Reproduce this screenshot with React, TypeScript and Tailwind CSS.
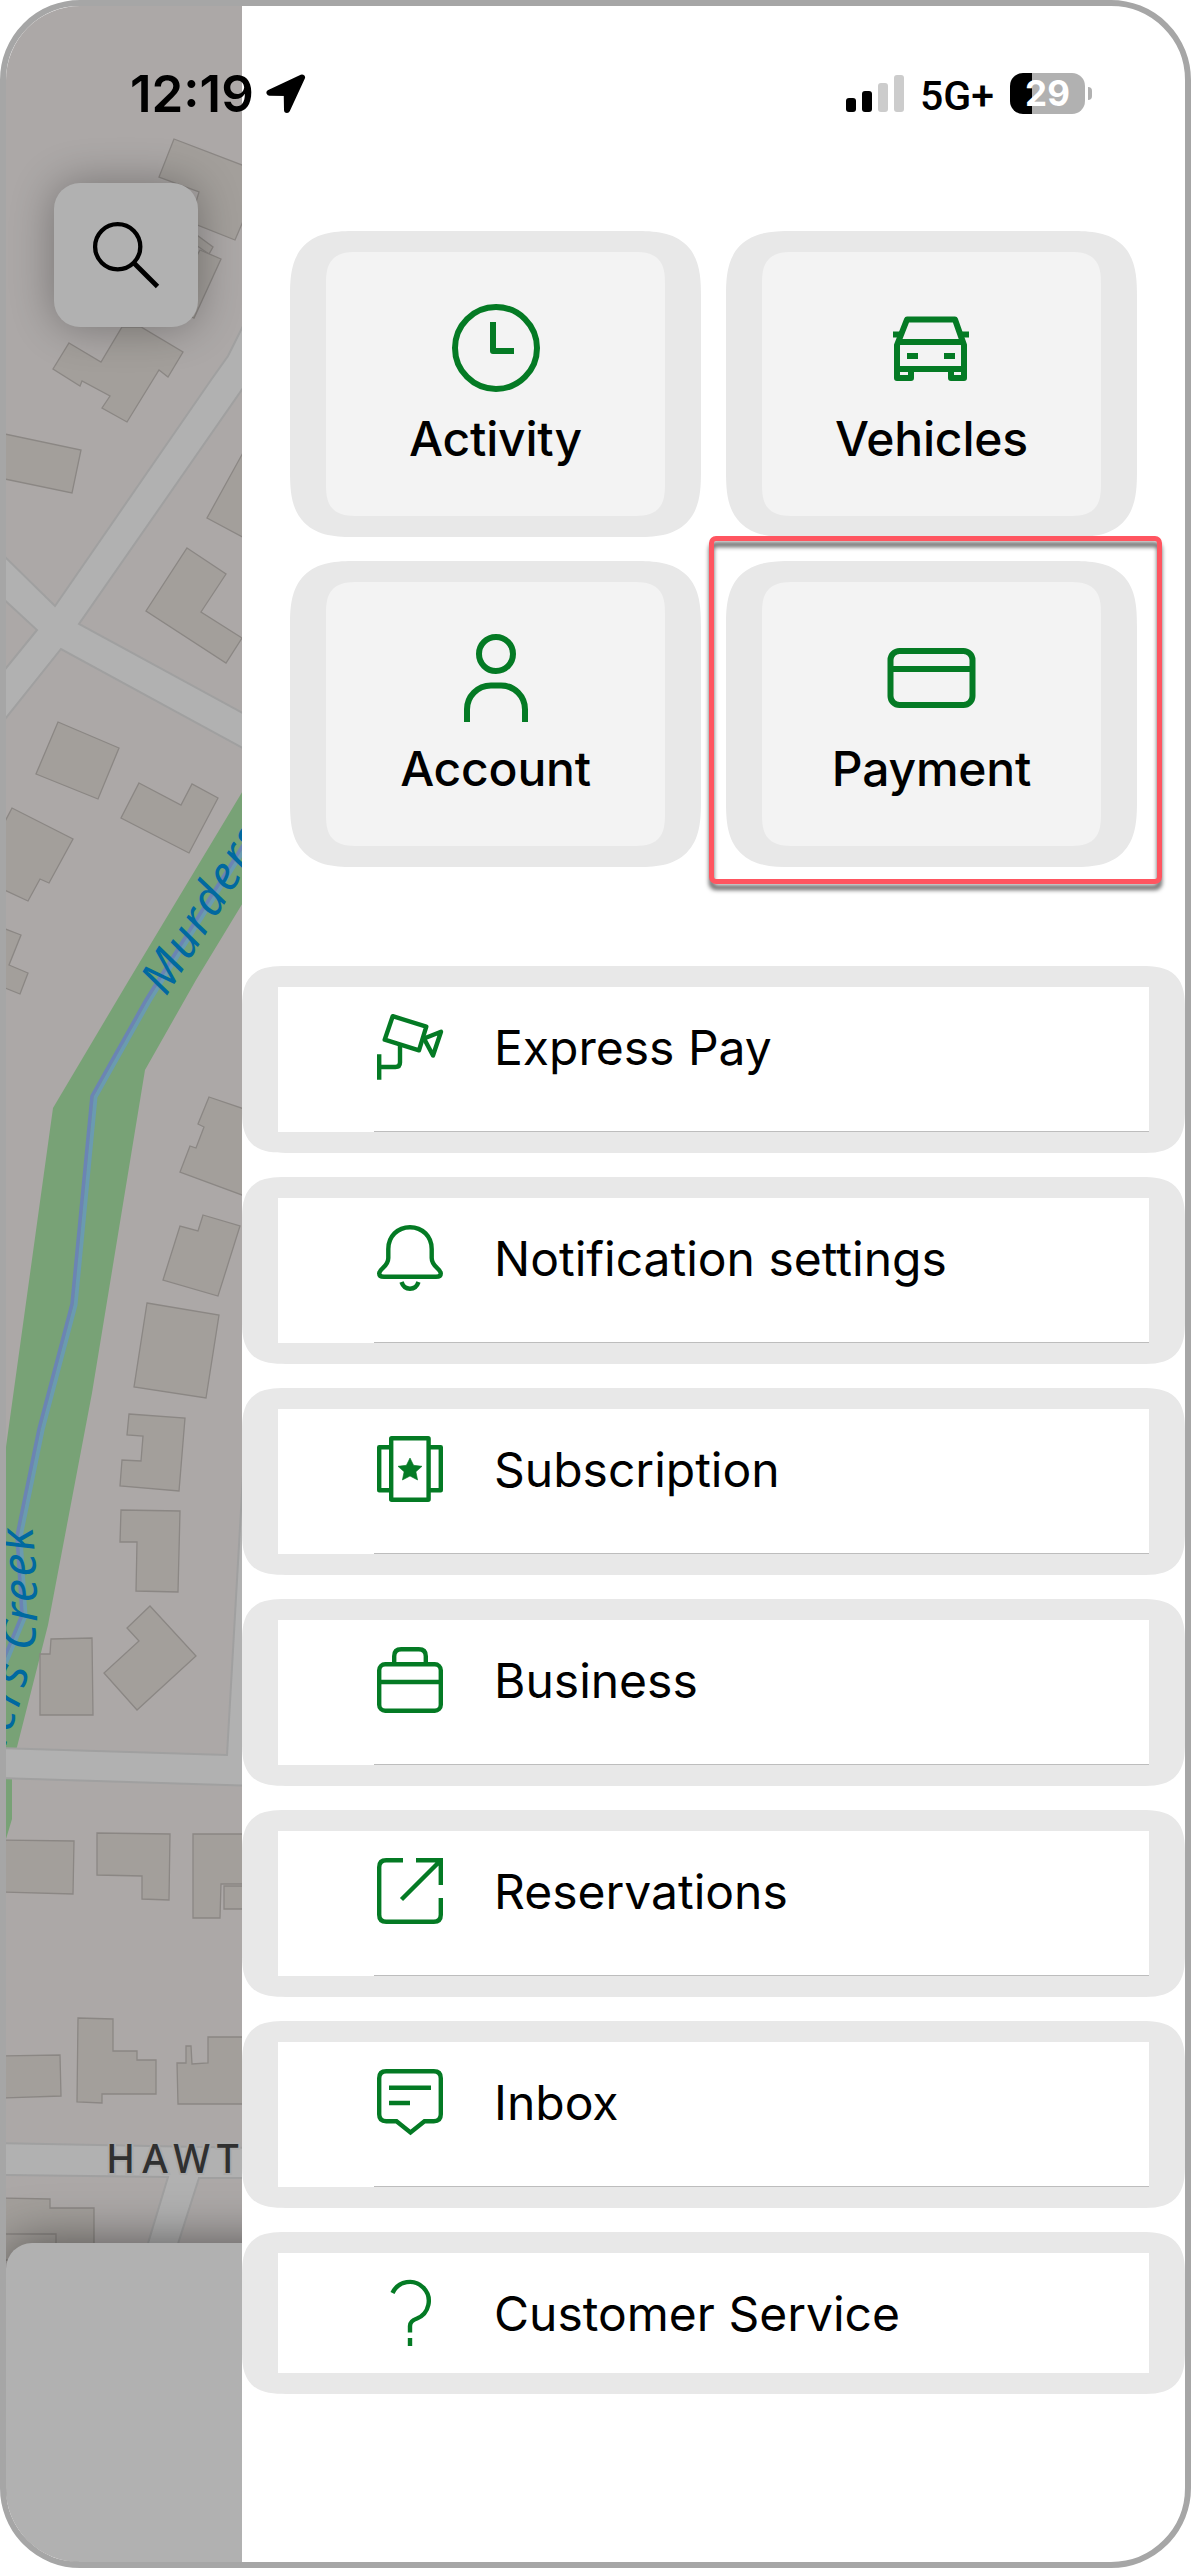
import React from 'react';

interface IconProps {
  children: React.ReactNode;
}

const TileIcon: React.FC<IconProps> = ({ children }) => (
  <svg viewBox="0 0 96 96" className="size-24" fill="none" stroke="#047a24" strokeWidth="6">
    {children}
  </svg>
);

const RowIcon: React.FC<IconProps> = ({ children }) => (
  <svg viewBox="0 0 66 66" className="size-[66px] shrink-0 overflow-visible" fill="none" stroke="#047a24" strokeWidth="4.4">
    {children}
  </svg>
);

const tiles = [
  {
    label: 'Activity',
    icon: (
      <TileIcon>
        <circle cx="48" cy="48" r="41" />
        <path d="M45 22V51H66" strokeLinejoin="round" />
      </TileIcon>
    ),
  },
  {
    label: 'Vehicles',
    icon: (
      <TileIcon>
        <path d="M23 19.500H71L80 45V69H13V45Z" strokeLinejoin="round" />
        <path d="M15 42H79M9 34.500H18M76 34.500H85M23 56H34M60 56H71" />
        <path d="M13 67V78H27V69M67 69V78H80V67" strokeLinejoin="round" />
      </TileIcon>
    ),
  },
  {
    label: 'Account',
    icon: (
      <TileIcon>
        <circle cx="48" cy="24" r="17" />
        <path d="M19 92V80A24 24 0 0 1 43 55.500H53A24 24 0 0 1 77 80V92" />
      </TileIcon>
    ),
  },
  {
    label: 'Payment',
    highlighted: true,
    icon: (
      <TileIcon>
        <rect x="6.500" y="21" width="82" height="54" rx="9" />
        <path d="M6.500 39H88.500" />
      </TileIcon>
    ),
  },
];

const rows = [
  {
    label: 'Express Pay',
    icon: (
      <RowIcon>
        <path d="M15.700 2.200L49.300 12.700L42 36.300L7.700 25.700Z" strokeLinejoin="round" />
        <path d="M47 24.500L64 17.700L56 41.500Z" strokeLinejoin="round" />
        <path d="M2.200 40.300V65.700M2.200 53H18.500Q23 53 23 48.500V30" />
      </RowIcon>
    ),
  },
  {
    label: 'Notification settings',
    icon: (
      <RowIcon>
        <path d="M33 2.200C20.500 2.200 11.300 11.500 11.300 24V33C11.300 42 2.200 43.500 2.200 48.500C2.200 50.800 4 51.800 7 51.800H59C62 51.800 63.800 50.800 63.800 48.500C63.800 43.500 54.700 42 54.700 33V24C54.700 11.500 45.500 2.200 33 2.200Z" />
        <path d="M24.500 57C26 61.500 29 63.700 33 63.700S40 61.500 41.500 57" />
      </RowIcon>
    ),
  },
  {
    label: 'Subscription',
    icon: (
      <RowIcon>
        <rect x="14.200" y="2.200" width="37.400" height="61.600" rx="0.500" />
        <path d="M14 11.200H2.200V54.300H14M52 11.200H63.800V54.300H52" strokeLinejoin="round" />
        <path
          d="M33 22L36.600 29.300L45 30.300L38.900 35.800L40.600 44L33 40L25.400 44L27.100 35.800L21 30.300L29.400 29.300Z"
          fill="#047a24"
          strokeWidth="0.600"
        />
      </RowIcon>
    ),
  },
  {
    label: 'Business',
    icon: (
      <RowIcon>
        <rect x="2.200" y="17.200" width="61.600" height="46.600" rx="6" />
        <path d="M2.200 35H63.800M17.200 17V9.200Q17.200 2.200 24.200 2.200H41.800Q48.800 2.200 48.800 9.200V17" />
      </RowIcon>
    ),
  },
  {
    label: 'Reservations',
    icon: (
      <RowIcon>
        <path d="M26 2.200H9.200Q2.200 2.200 2.200 9.200V56.800Q2.200 63.800 9.200 63.800H56.800Q63.800 63.800 63.800 56.800V40" />
        <path d="M39 2.200H63.800V27M63.800 2.200L24.500 41.500" />
      </RowIcon>
    ),
  },
  {
    label: 'Inbox',
    icon: (
      <RowIcon>
        <path d="M9.200 2.200H56.800Q63.800 2.200 63.800 9.200V45.200Q63.800 52.200 56.800 52.200H47.500L33.500 63.500L19.500 52.200H9.200Q2.200 52.200 2.200 45.200V9.200Q2.200 2.200 9.200 2.200Z" />
        <path d="M12 18.800H54M12 34H33" />
      </RowIcon>
    ),
  },
  {
    label: 'Customer Service',
    icon: (
      <RowIcon>
        <path d="M15.500 13A19 19 0 1 1 40 38.500C35.500 40 33 42 33 46V52.500M33 58V66" />
      </RowIcon>
    ),
  },
];

const buildings = [
  '174,139 159,177 199,192 190,222 235,240 250,205 250,168',
  '190,230 213,247 209,254 190,241',
  '200,250 221,259 194,318 170,306',
  '69,343 101,362 122,327 141,327 183,352 168,377 159,370 127,422 102,408 110,396 82,381 80,386 53,369',
  '0,433 81,450 72,493 0,478',
  '250,440 207,518 250,541',
  '187,548 226,574 201,612 242,638 226,663 146,611',
  '58,722 119,748 98,799 36,774',
  '139,783 181,805 192,784 218,798 189,853 121,818',
  '0,831 12,808 73,839 49,883 40,879 28,901 0,888',
  '0,927 21,935 9,965 28,973 20,994 0,986',
  '209,1097 250,1111 250,1198 180,1172 190,1146 196,1148 204,1127 198,1124',
  '203,1215 240,1226 218,1296 163,1280 180,1226 198,1231',
  '147,1303 219,1315 206,1398 134,1387',
  '129,1414 185,1418 179,1491 120,1486 122,1460 141,1461 143,1436 127,1435',
  '121,1510 180,1511 178,1592 136,1591 137,1542 120,1542',
  '150,1606 196,1656 137,1710 104,1673 139,1641 127,1628',
  '51,1639 92,1638 93,1715 40,1715 40,1654 50,1654',
  '0,1840 74,1841 73,1894 0,1892',
  '97,1833 170,1834 169,1900 142,1899 142,1876 97,1875',
  '193,1834 250,1834 250,1884 221,1884 220,1918 193,1918',
  '224,1886 250,1886 250,1909 224,1909',
  '0,2056 60,2055 61,2096 0,2098',
  '78,2018 113,2019 113,2051 137,2051 137,2060 156,2060 156,2094 102,2094 102,2103 77,2102',
  '208,2037 250,2037 250,2104 178,2104 177,2063 186,2063 186,2046 191,2046 192,2064 208,2063',
  '0,2198 50,2199 50,2208 94,2208 94,2260 0,2260',
  '0,2234 56,2234 56,2260 0,2260',
];

const roads = [
  '250,312 228,356 211,380 55,606 -2,550 -2,594 37,630 -2,678 -2,728 61,649 250,752 250,717 79,624 250,378',
  '-2,1748 227,1755 243,1475 260,1475 260,1786 -2,1778',
  '-2,2143 250,2148 250,2178 199,2178 176,2250 146,2250 168,2177 -2,2175',
];

const creek = '250,834 146,1000 92,1096 72,1304 39,1429 17,1536 22,1615 0,1668';

const MapStrip: React.FC = () => (
  <div className="relative flex w-[236px] shrink-0 flex-col justify-end overflow-hidden bg-[#aca8a7]">
    <svg viewBox="6 6 236 2556" className="absolute inset-0 h-[2556px] w-[236px]">
      <polygon
        fill="#78a276"
        points="250,779 129,980 53,1108 6,1447 0,1500 0,1839 6,1839 12,1819 12,1760 17,1747 48,1625 92,1393 145,1070 196,980 250,891"
      />
      <polyline points={creek} fill="none" stroke="#6a9bb0" strokeWidth="4" transform="translate(3.500 1)" />
      <polyline points={creek} fill="none" stroke="#6b84b4" strokeWidth="3.500" />
      {roads.map((points) => (
        <polygon key={points} points={points} fill="#b1b1b1" stroke="#a0a0a0" strokeWidth="2" />
      ))}
      {buildings.map((points) => (
        <polygon key={points} points={points} fill="#a39f9b" stroke="#8b8784" strokeWidth="1.300" />
      ))}
      <path id="creek-upper" d="M166 997L204 937L242 876L300 783" fill="none" />
      <path id="creek-lower" d="M-60 1970Q-16 1850 6 1745Q37 1660 37 1610Q37 1570 32 1524" fill="none" />
      <g className="fill-[#0069a0] font-['Noto_Sans'] text-[47px] tracking-[2.5px] italic">
        <text>
          <textPath href="#creek-upper">Murders</textPath>
        </text>
        <text textAnchor="end">
          <textPath href="#creek-lower" startOffset="100%">
            Murders Creek
          </textPath>
        </text>
      </g>
      <text
        x="106"
        y="2173"
        className="fill-[#303030] font-['Noto_Sans'] text-[39px] font-medium tracking-[7px]"
        stroke="#aaaaaa"
        strokeWidth="4"
        paintOrder="stroke"
      >
        HAWT
      </text>
    </svg>
    <button
      aria-label="Search"
      className="absolute top-[177px] left-12 flex size-36 items-center justify-center rounded-[26px] bg-[#b1b1b1] shadow-[0_0_44px_rgba(0,0,0,0.32)]"
    >
      <svg viewBox="0 0 72 72" className="size-[72px]" fill="none" stroke="#000" strokeWidth="4.300">
        <circle cx="27.700" cy="27.700" r="22.600" />
        <path d="M43.700 43.700L67.500 67.500" strokeWidth="4.800" />
      </svg>
    </button>
    {/* collapsed bottom sheet */}
    <div className="relative h-[319px] w-[300px] shrink-0 rounded-tl-[26px] bg-[#b1b1b1] shadow-[0_0_50px_rgba(0,0,0,0.5)]" />
  </div>
);

const StatusBar: React.FC = () => (
  <header className="absolute top-[67px] left-[124px] z-10 flex h-[41px] w-[962px] items-center justify-between text-black">
    <div className="flex items-center gap-3">
      <span className="text-[51px] leading-none font-semibold">12:19</span>
      <svg viewBox="0 0 40 40" className="size-10">
        <path
          d="M36 3.500L3.500 18.700L20.700 19L21 36Z"
          fill="#000"
          stroke="#000"
          strokeWidth="6"
          strokeLinejoin="round"
        />
      </svg>
    </div>
    <div className="flex items-center">
      <div className="flex h-[37px] items-end gap-1.5">
        <span className="h-3.5 w-2.5 rounded-[3px] bg-black" />
        <span className="h-[21px] w-2.5 rounded-[3px] bg-black" />
        <span className="h-[29px] w-2.5 rounded-[3px] bg-[#cccccc]" />
        <span className="h-[37px] w-2.5 rounded-[3px] bg-[#cccccc]" />
      </div>
      <span className="mt-[5px] ml-4 w-[90px] font-[Roboto] text-[41px] leading-none font-medium">5G+</span>
      <div className="flex h-[41px] w-[75px] items-center justify-center rounded-[13px] bg-[linear-gradient(90deg,#000_22px,#b1b1b1_22px)]">
        <span className="text-[35px] leading-none font-bold text-white">29</span>
      </div>
      <span className="ml-[3px] h-[13px] w-1 rounded-r-full bg-[#b1b1b1]" />
    </div>
  </header>
);

export default function App() {
  return (
    <div className="bg-white font-[Inter,sans-serif]">
      <div className="relative flex h-[2568px] w-[1191px] overflow-hidden rounded-[80px] border-[6px] border-[#a6a6a6] bg-white">
        <MapStrip />
        <StatusBar />
        <main className="flex grow flex-col pt-[225px]">
          <div className="grid grid-cols-[411px_411px] gap-x-[25px] gap-y-6 pl-12">
            {tiles.map((tile) => (
              <div
                key={tile.label}
                className="relative rounded-[66px] bg-[#e8e8e8] px-9 py-[21px] [corner-shape:superellipse(1.5)]"
              >
                <button className="flex h-[264px] w-full flex-col items-center rounded-[32px] bg-[#f3f3f3] pt-12 text-5xl font-medium tracking-[-0.2px] text-black [corner-shape:superellipse(1.5)]">
                  {tile.icon}
                  <span className="mt-[19px]">{tile.label}</span>
                </button>
                {tile.highlighted && (
                  <div className="absolute -top-[25px] -left-[17px] h-[348px] w-[453px] rounded-[7px] border-[5px] border-[#ff5560] drop-shadow-[0_6px_2px_rgba(0,0,0,0.6)]" />
                )}
              </div>
            ))}
          </div>
          <nav className="mt-[99px] flex flex-col gap-6">
            {rows.map((row, i) => (
              <div
                key={row.label}
                className="rounded-[44px] bg-[#e8e8e8] px-9 py-[21px] [corner-shape:superellipse(1.5)]"
              >
                <a className={`flex flex-col bg-white ${i < rows.length - 1 ? 'h-[145px]' : 'h-[120px]'}`}>
                  <div className="flex grow items-start gap-[51px] pt-[27px] pl-[99px]">
                    {row.icon}
                    <span className="mt-2.5 text-5xl text-black">{row.label}</span>
                  </div>
                  {i < rows.length - 1 && <div className="ml-24 h-px bg-[#bdbdbd]" />}
                </a>
              </div>
            ))}
          </nav>
        </main>
      </div>
    </div>
  );
}
